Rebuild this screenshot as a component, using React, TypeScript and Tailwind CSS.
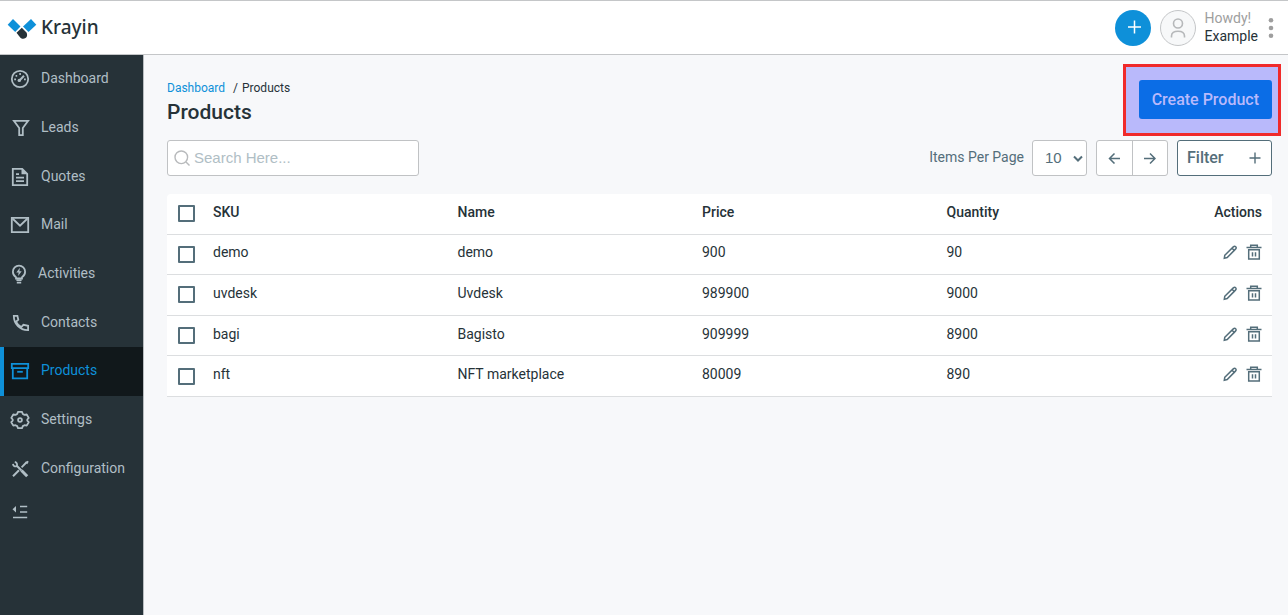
import React, { useState } from 'react';

interface IconProps {
  className?: string;
  children: React.ReactNode;
}

const Icon: React.FC<IconProps> = ({ className = 'w-5 h-5', children }) => (
  <svg className={className} viewBox="0 0 20 20" fill="none" stroke="currentColor" strokeWidth="1.8" aria-hidden="true">
    {children}
  </svg>
);

const MENU = [
  {
    label: 'Dashboard',
    icon: (
      <>
        <circle cx="10" cy="10" r="8.2" />
        <path d="M9.5 11.5 14 6.8" strokeWidth="2" />
        <circle cx="9.3" cy="11.4" r="1.7" fill="currentColor" stroke="none" />
        <path d="M4.2 10.3h1.8M14 10.3h1.8M9.3 5h1.6M5.6 6.9h1.6" />
      </>
    ),
  },
  {
    label: 'Leads',
    icon: <path d="M3.9 2.8h14.2L12.8 10v7.2H9.2V10z" />,
  },
  {
    label: 'Quotes',
    icon: (
      <>
        <path d="M2.8 1.8h9.4l5 5v11.4H2.8z" />
        <path d="M11.5 1.8v5.4h5.7z" fill="currentColor" stroke="none" />
        <path d="M6 7.2h3M6 10.6h8M6 14.2h8" />
      </>
    ),
  },
  {
    label: 'Mail',
    icon: (
      <>
        <path d="M1.8 2.8h16.4v14.4H1.8z" />
        <path d="m2.5 3.5 7.5 7.2 7.5-7.2" />
      </>
    ),
  },
  {
    label: 'Activities',
    icon: (
      <>
        <path d="M6 14.5v-1.2C4 12 2.9 10.2 2.9 7.8a6.1 6.1 0 0 1 12.2 0c0 2.4-1.1 4.2-3.1 5.5v1.2z" />
        <path d="M6.4 16.2h5.2M6.8 18.6h4.4" />
        <path d="M9.9 3.8 6.3 8.6h2.3l-.5 3.5 3.6-4.8H9.4z" fill="currentColor" stroke="none" />
      </>
    ),
  },
  {
    label: 'Contacts',
    icon: (
      <path d="M3.8 2.8h3.6l.9 3.9L6 8.7c1.1 2.5 2.8 4.2 5.3 5.4l2.1-2.3 4.7 1v4.3c-8.1.2-14.3-6-14.3-14.3z" />
    ),
  },
  {
    label: 'Products',
    icon: (
      <>
        <path d="M1.8 2.8h16.4v4.4H1.8zM2.8 7.2v10.2h14.4V7.2" />
        <path d="M7.2 10.8h5.6" />
      </>
    ),
  },
  {
    label: 'Settings',
    icon: (
      <>
        <path d="M7.2 4 8 1.9h4L12.8 4l1.7.9 2.2-.4 2 3.4L17.3 9.5v1.2l1.4 1.5-2 3.4-2.2-.4-1.7.9-.8 2.1H8l-.8-2.1-1.7-.9-2.2.4-2-3.4 1.4-1.5V9.5L1.3 7.9l2-3.4 2.2.4z" strokeLinejoin="round" />
        <circle cx="10" cy="10" r="1.9" />
      </>
    ),
  },
  {
    label: 'Configuration',
    icon: (
      <>
        <path d="m6.5 6.5 5 5M3 17.3l6-6" strokeWidth="2" />
        <path d="m11.5 11.5 5.7 5.7" strokeWidth="3" />
        <path d="m11.6 8.4 5.2-5.4" strokeWidth="1.9" />
        <path d="M3 4.8c.2 2 1.4 3 3.8 2.4C7.5 4.8 6.8 3.4 4.8 3" />
        <path d="m15.2 3.2 2.5-1.4 1 1-1.5 2.4z" fill="currentColor" stroke="none" />
      </>
    ),
  },
];

const PRODUCTS = [
  { sku: 'demo', name: 'demo', price: 900, quantity: 90 },
  { sku: 'uvdesk', name: 'Uvdesk', price: 989900, quantity: 9000 },
  { sku: 'bagi', name: 'Bagisto', price: 909999, quantity: 8900 },
  { sku: 'nft', name: 'NFT marketplace', price: 80009, quantity: 890 },
];

const Header: React.FC = () => (
  <header className="h-[55px] shrink-0 flex items-center justify-between pl-[7px] pr-3 bg-white border-y border-[#c4c6c8]">
    <a href="#" className="flex items-center gap-1 text-[#263238]">
      <svg className="w-[30px] h-[22px]" viewBox="0 -2 30 22" aria-hidden="true">
        <path d="M6 0 13.5 7.5 8.2 13 .7 5.7z" fill="#0e90d9" />
        <path d="M24 0 29.3 5.7 21.500 13 16 7.500z" fill="#0e90d9" />
        <path d="M14.800 8.700 19.500 13.500c1.100 2.500.6 4.500-1 5.600-1.800 1.200-4 .8-5.300-.6L9.500 13.800z" fill="#263238" />
      </svg>
      <span className="font-['Noto_Sans',sans-serif] text-[19px] font-medium">Krayin</span>
    </a>
    <div className="flex items-center">
      <button aria-label="Quick add" className="w-9 h-9 mr-[9px] rounded-full bg-[#0e90d9] text-white flex items-center justify-center">
        <svg className="w-4 h-4" viewBox="0 0 16 16" stroke="currentColor" strokeWidth="1.5" aria-hidden="true">
          <path d="M9.5 .5v13M3 7h13" />
        </svg>
      </button>
      <span className="w-9 h-9 mr-[9px] rounded-full border border-[#c4c6c8] bg-[#f7f8f9] text-[#b6b8ba] flex items-center justify-center">
        <svg className="w-5 h-5" viewBox="0 0 20 20" fill="none" stroke="currentColor" strokeWidth="1.6" aria-hidden="true">
          <circle cx="10" cy="5.5" r="4.5" />
          <path d="M3.5 19.5v-1.5c0-3 2.5-4.8 6.5-4.8s6.5 1.8 6.5 4.8v1.5" />
        </svg>
      </span>
      <div className="text-sm leading-[18px] mr-2 pb-[2px]">
        <p className="text-[#9e9e9e]">Howdy!</p>
        <p className="text-[#263238]">Example</p>
      </div>
      <button aria-label="Account menu" className="text-[#9e9e9e]">
        <svg className="w-[10px] h-5" viewBox="0 0 10 20" fill="currentColor" aria-hidden="true">
          <circle cx="5" cy="2.3" r="2.3" />
          <circle cx="5" cy="10" r="2.3" />
          <circle cx="5" cy="17.7" r="2.3" />
        </svg>
      </button>
    </div>
  </header>
);

const Sidebar: React.FC = () => (
  <aside className="w-36 shrink-0 bg-[#263238] border-r border-[#b9bdc0] text-[#b0bec5]">
    <nav>
      <ul className="h-[438px] grid auto-rows-fr">
        {MENU.map((item) => (
          <li key={item.label} className="flex">
            <a
              href="#"
              className={
                item.label === 'Products'
                  ? 'flex-1 flex items-center pl-[6px] border-l-4 border-[#0e90d9] bg-[#11181b] text-[#0e90d9]'
                  : 'flex-1 flex items-center pl-[10px]'
              }
            >
              <Icon>{item.icon}</Icon>
              <span className={item.label === 'Activities' ? 'pl-2 pb-[2px] text-sm' : 'pl-[11px] pb-[2px] text-sm'}>
                {item.label}
              </span>
            </a>
          </li>
        ))}
      </ul>
    </nav>
    <button aria-label="Collapse menu" className="ml-[10px] mt-2 block">
      <Icon>
        <path d="M10 5.5h7.2M10 11h7.2M3 16.5h14.2" strokeWidth="1.5" />
        <path d="M6 5v6.5L2.5 8.3z" fill="currentColor" stroke="none" />
      </Icon>
    </button>
  </aside>
);

const Checkbox: React.FC<{ label: string }> = ({ label }) => (
  <input
    type="checkbox"
    aria-label={label}
    className="block w-[17px] h-[17px] ml-[11px] appearance-none rounded-[1px] border-2 border-[#546e7a] bg-white checked:bg-[#546e7a]"
  />
);

const ProductTable: React.FC = () => (
  <table className="w-full h-[203px] table-fixed bg-white rounded-t-[4px] text-left text-sm">
    <thead>
      <tr className="h-10 border-b border-[#dcdee0]">
        <th className="w-9"><Checkbox label="Select all" /></th>
        <th className="px-[10px] pb-1 font-medium">SKU</th>
        <th className="px-[10px] pb-1 font-medium">Name</th>
        <th className="px-[10px] pb-1 font-medium">Price</th>
        <th className="px-[10px] pb-1 font-medium">Quantity</th>
        <th className="w-[91px] px-[10px] pb-1 font-medium text-right">Actions</th>
      </tr>
    </thead>
    <tbody>
      {PRODUCTS.map((product) => (
        <tr key={product.sku} className="border-b border-[#dcdee0]">
          <td><Checkbox label={`Select ${product.sku}`} /></td>
          <td className="px-[10px] pb-1">{product.sku}</td>
          <td className="px-[10px] pb-1">{product.name}</td>
          <td className="px-[10px] pb-1">{product.price}</td>
          <td className="px-[10px] pb-1">{product.quantity}</td>
          <td className="px-[10px] pb-1">
            <div className="flex justify-end gap-2 text-[#546e7a]">
              <button aria-label={`Edit ${product.sku}`}>
                <svg className="w-4 h-4" viewBox="0 0 16 16" fill="none" stroke="currentColor" strokeWidth="1.5" aria-hidden="true">
                  <path d="m2.8 11.2 8.5-8.3c.9-.9 1.700-.9 2.400-.2.800.8.700 1.500-.2 2.400L5.200 13.600 2.300 14.200z" />
                  <path d="m10 4.2 2.500 2.400" />
                </svg>
              </button>
              <button aria-label={`Delete ${product.sku}`}>
                <svg className="w-4 h-4" viewBox="0 0 16 16" fill="none" stroke="currentColor" strokeWidth="1.5" aria-hidden="true">
                  <path d="M.5 3.6h15M4.7 3.2V1.2h6.600v2M2.700 5.800h10.600v9.100H2.700z" />
                  <path d="M6.500 8.200v4.300M9.500 8.200v4.300" />
                </svg>
              </button>
            </div>
          </td>
        </tr>
      ))}
    </tbody>
  </table>
);

const App: React.FC = () => {
  const [perPage, setPerPage] = useState('10');

  return (
    <div className="min-h-screen flex flex-col bg-[#f7f8fa] text-[#263238] font-['Roboto',sans-serif]">
      <Header />
      <div className="flex flex-1">
        <Sidebar />
        <main className="flex-1 min-w-0 pl-[23px] pr-4 pt-[25px]">
          <div className="flex items-start justify-between">
            <div>
              <nav aria-label="Breadcrumb" className="flex text-xs leading-4">
                <a href="#" className="text-[#0e90d9]">Dashboard</a>
                <span className="pl-2 pr-1">/</span>
                <span>Products</span>
              </nav>
              <h1 className="text-[21px] leading-8 font-medium">Products</h1>
            </div>
            <div className="relative">
              <div className="absolute -top-4 -bottom-[17px] -left-4 -right-[9px] border-3 border-[#f02a2a] bg-[#b9b9fb]" />
              <button className="relative h-[39px] px-[13px] rounded-[3px] bg-[#0b6de6] text-[#b9b9fb] text-base font-medium">
                Create Product
              </button>
            </div>
          </div>

          <div className="mt-3 flex items-center justify-between">
            <label className="flex items-center w-[252px] h-9 pl-[6px] rounded-[3px] border border-[#c0c2c4] bg-white">
              <svg className="w-[17px] h-[17px] shrink-0 text-[#b8babc]" viewBox="0 0 17 17" fill="none" stroke="currentColor" strokeWidth="1.4" aria-hidden="true">
                <circle cx="7.3" cy="7.3" r="6.3" />
                <path d="m12 12 3.500 3.500" />
              </svg>
              <input
                type="text"
                aria-label="Search"
                placeholder="Search Here..."
                className="flex-1 min-w-0 pl-[3px] outline-none font-['Liberation_Sans',sans-serif] text-[15px] placeholder:text-[#b0bec5]"
              />
            </label>

            <div className="flex items-center text-[#546e7a]">
              <label htmlFor="per-page" className="pb-[2px] mr-2 text-sm">Items Per Page</label>
              <div className="relative">
                <select
                  id="per-page"
                  value={perPage}
                  onChange={(e) => setPerPage(e.target.value)}
                  className="block appearance-none w-[55px] h-9 pl-3 rounded-[3px] border border-[#c0c2c4] bg-white font-['Liberation_Sans',sans-serif] text-[15px]"
                >
                  <option>10</option>
                  <option>20</option>
                  <option>50</option>
                </select>
                <svg className="absolute right-1 top-[14px] w-[10px] h-[10px] pointer-events-none" viewBox="0 0 10 10" fill="none" stroke="currentColor" strokeWidth="2" aria-hidden="true">
                  <path d="m1 2.500 4 4 4-4" />
                </svg>
              </div>
              <div className="ml-[9px] flex h-9 w-[72px] rounded-[3px] border border-[#c0c2c4] bg-white divide-x divide-[#c0c2c4]">
                <button aria-label="Previous page" className="flex-1 flex items-center justify-center">
                  <svg className="w-3 h-3" viewBox="0 0 12 12" fill="none" stroke="currentColor" strokeWidth="1.5" aria-hidden="true">
                    <path d="M12.500 6.500h-11M6.500 1.500l-5 5 5 5" />
                  </svg>
                </button>
                <button aria-label="Next page" className="flex-1 flex items-center justify-center">
                  <svg className="w-3 h-3" viewBox="0 0 12 12" fill="none" stroke="currentColor" strokeWidth="1.5" aria-hidden="true">
                    <path d="M0 6.500h11M6 1.500l5 5-5 5" />
                  </svg>
                </button>
              </div>
              <button className="ml-[9px] flex items-center justify-between w-[95px] h-9 pl-[9px] pr-[10px] rounded-[3px] border border-[#546e7a] bg-white text-base font-medium">
                <span className="pb-px">Filter</span>
                <svg className="w-3 h-3" viewBox="0 0 12 12" stroke="currentColor" strokeWidth="1.4" aria-hidden="true">
                  <path d="M6 .5v11M.5 6h11" />
                </svg>
              </button>
            </div>
          </div>

          <div className="mt-[18px]">
            <ProductTable />
          </div>
        </main>
      </div>
    </div>
  );
};

export default App;
